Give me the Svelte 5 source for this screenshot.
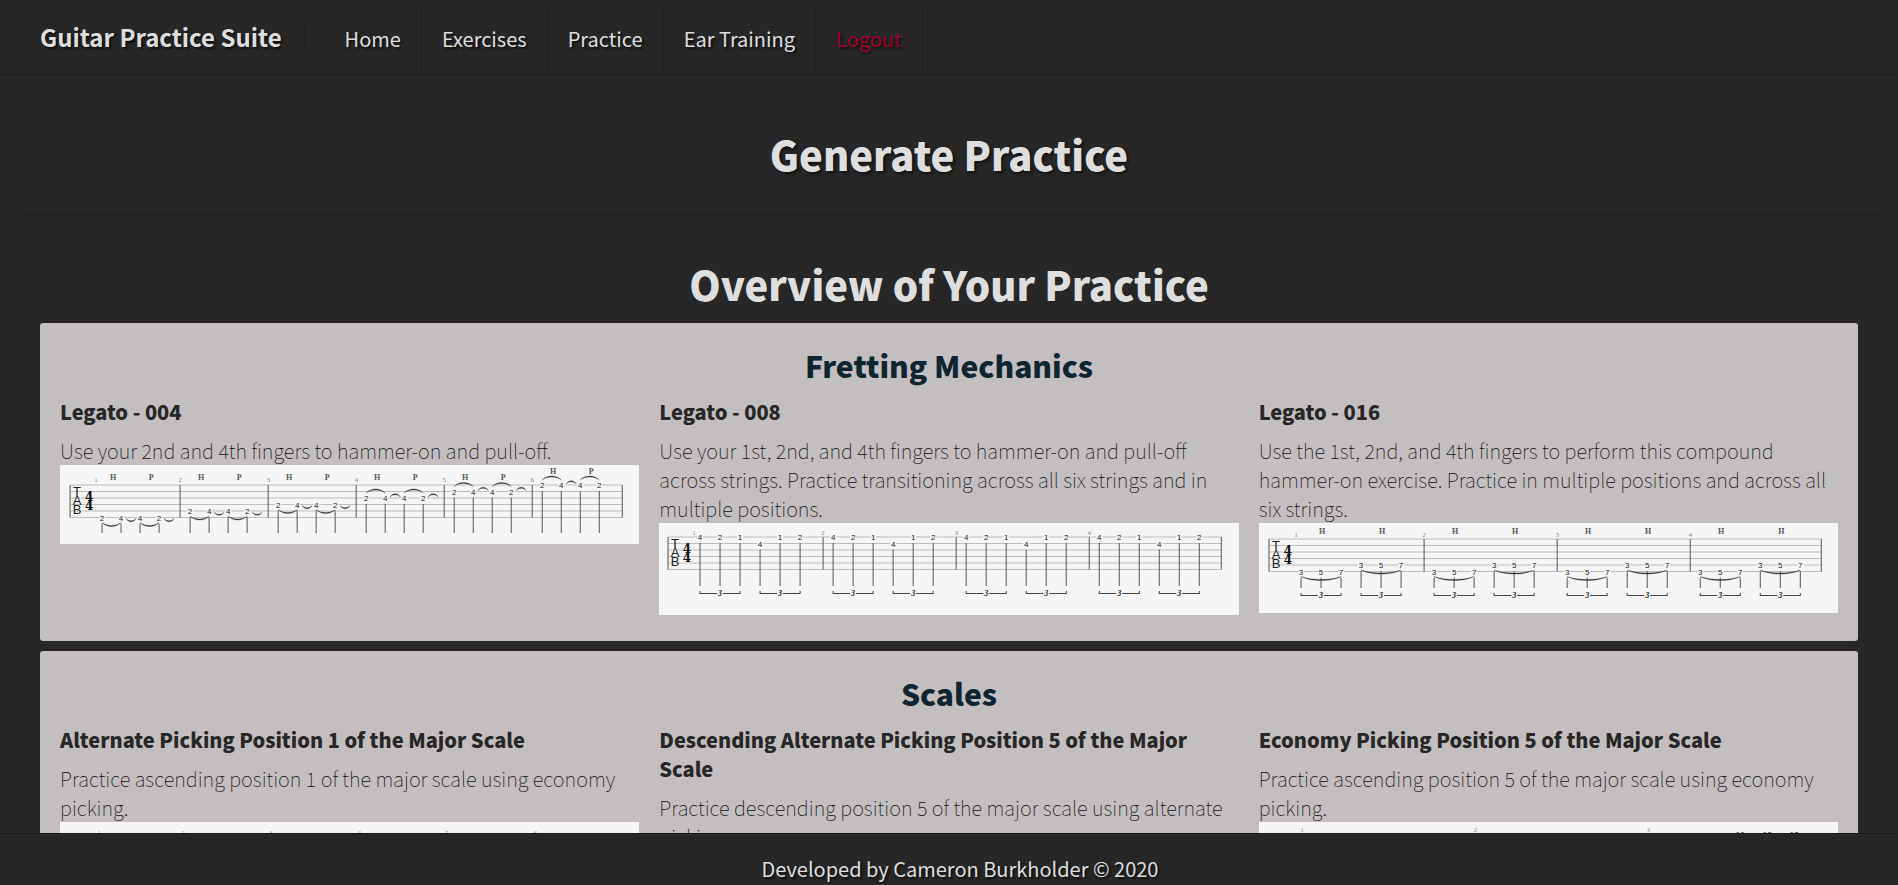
<script>
  const links = ['Home', 'Exercises', 'Practice', 'Ear Training'];

  const legato4 = {
    label: 'Tablature for Legato - 004',
    height: 79, top: 20, left: 10, gap: 88, measures: 6, origin: 32, numberY: 15, firstNumber: 36, stemEnd: 68,
    notes: (m) => [2, 4, 4, 2].map((fret, i) => ({ x: 10 + i * 19, fret, string: 5 - m })),
    slurs: (m) => {
      const up = m > 2;
      return [
        { from: 10, to: 29, string: 5 - m, up, wide: true },
        { from: 34, to: 44, string: 5 - m, up },
        { from: 48, to: 67, string: 5 - m, up, wide: true },
        ...(m < 5 ? [{ from: 72, to: 82, string: 5 - m, up }] : [])
      ];
    },
    marks: (m) => [
      { x: 21, y: m === 5 ? 6 : 12, text: 'H' },
      { x: 59, y: m === 5 ? 6 : 12, text: 'P' }
    ],
    triplets: []
  };

  const legato8 = {
    label: 'Tablature for Legato - 008',
    height: 92, top: 14, left: 9, gap: 133, measures: 4, origin: 31, numberY: 10, firstNumber: 35, stemEnd: 63,
    notes: () => [4, 2, 1, 4, 1, 2].map((fret, i) => ({ x: 10 + i * 20, fret, string: i === 3 ? 1 : 0 })),
    slurs: () => [],
    marks: () => [],
    triplets: [10, 70], tripletY: 70
  };

  const legato16 = {
    label: 'Tablature for Legato - 016',
    height: 90, top: 16, left: 10, gap: 133, measures: 4, origin: 32, numberY: 12, firstNumber: 37, stemEnd: 65,
    notes: () => [3, 5, 7, 3, 5, 7].map((fret, i) => ({ x: 10 + i * 20, fret, string: i < 3 ? 5 : 4 })),
    slurs: () => [
      { from: 10, to: 50, string: 5, wide: true },
      { from: 70, to: 110, string: 4, wide: true }
    ],
    marks: () => [{ x: 31, y: 8, text: 'H' }, { x: 91, y: 8, text: 'H' }],
    triplets: [10, 70], tripletY: 72
  };

  const scaleTab = (label, top, gap, measures, origin, firstNumber, notes) => ({
    label, height: 92, top, left: 10, gap, measures, origin, firstNumber, numberY: top - 4, stemEnd: 68,
    notes, slurs: () => [], marks: () => [], triplets: []
  });

  const ascending = scaleTab('Tablature for position 1', 15, 88, 6, 35, 39, (m) =>
    [2, 4, 5, 2].map((fret, i) => ({ x: 10 + i * 19, fret, string: 5 - m })));
  const descending = scaleTab('Tablature for descending position 5', 16, 133, 4, 32, 36, (m) =>
    [13, 12, 10, 13].map((fret, i) => ({ x: 12 + i * 28, fret, string: m })));
  const economy = scaleTab('Tablature for position 5', 12, 173, 3, 43, 43, (m) =>
    [10, 12, 13, 10, 12, 13].map((fret, i) => ({ x: 11 + i * 27, fret, string: 5 - m * 2 - (i > 2 ? 1 : 0) })));

  const sections = [
    {
      title: 'Fretting Mechanics',
      exercises: [
        { title: 'Legato - 004', text: 'Use your 2nd and 4th fingers to hammer-on and pull-off.', tab: legato4 },
        { title: 'Legato - 008', text: 'Use your 1st, 2nd, and 4th fingers to hammer-on and pull-off across strings. Practice transitioning across all six strings and in multiple positions.', tab: legato8 },
        { title: 'Legato - 016', text: 'Use the 1st, 2nd, and 4th fingers to perform this compound hammer-on exercise. Practice in multiple positions and across all six strings.', tab: legato16 }
      ]
    },
    {
      title: 'Scales',
      exercises: [
        { title: 'Alternate Picking Position 1 of the Major Scale', text: 'Practice ascending position 1 of the major scale using economy picking.', tab: ascending },
        { title: 'Descending Alternate Picking Position 5 of the Major Scale', text: 'Practice descending position 5 of the major scale using alternate picking.', tab: descending },
        { title: 'Economy Picking Position 5 of the Major Scale', text: 'Practice ascending position 5 of the major scale using economy picking.', tab: economy }
      ]
    }
  ];

  const spacing = 6.5;
  const right = 562;
  const stringY = (tab, n) => tab.top + n * spacing;

  function slurPath(tab, x0, s) {
    const dir = s.up ? -1 : 1;
    const y = stringY(tab, s.string) + dir * (s.wide ? 5 : 1);
    const bend = s.wide ? 4 : 3;
    const a = x0 + s.from;
    const b = x0 + s.to;
    const q = (b - a) / 4;
    return `M${a} ${y}C${a + q} ${y + dir * bend} ${b - q} ${y + dir * bend} ${b} ${y}C${b - q} ${y + dir * (bend + 1.4)} ${a + q} ${y + dir * (bend + 1.4)} ${a} ${y}Z`;
  }
</script>

{#snippet tablature(tab)}
  {@const bottom = stringY(tab, 5)}
  <svg class="tab" viewBox="0 0 579 {tab.height}" role="img" aria-label={tab.label}>
    {#each [0, 1, 2, 3, 4, 5] as n}
      <line class="string" x1={tab.left} x2={right} y1={stringY(tab, n)} y2={stringY(tab, n)} />
    {/each}
    <line class="bar" x1={tab.left} x2={tab.left} y1={tab.top} y2={bottom} />
    {#each ['T', 'A', 'B'] as letter, i}
      <text class="clef" x={tab.left + 7} y={tab.top + 11 + i * 9}>{letter}</text>
    {/each}
    <text class="meter" x={tab.left + 19} y={tab.top + 16}>4</text>
    <text class="meter" x={tab.left + 19} y={tab.top + 25}>4</text>
    {#each Array(tab.measures) as _, m}
      {@const x0 = tab.origin + m * tab.gap}
      <text class="number" x={m === 0 ? tab.firstNumber : x0} y={tab.numberY + 2}>{m + 1}</text>
      <line class="bar" x1={m === tab.measures - 1 ? right : x0 + tab.gap} x2={m === tab.measures - 1 ? right : x0 + tab.gap} y1={tab.top} y2={bottom} />
      {#each tab.notes(m) as note}
        {@const y = stringY(tab, note.string)}
        <line class="stem" x1={x0 + note.x} x2={x0 + note.x} y1={y + 6} y2={tab.stemEnd} />
        <rect class="mask" x={x0 + note.x - 3} y={y - 3} width="6" height="6" />
        <text class="fret" x={x0 + note.x} y={y + 3}>{note.fret}</text>
      {/each}
      {#each tab.slurs(m) as slur}
        <path class="slur" d={slurPath(tab, x0, slur)} />
      {/each}
      {#each tab.marks(m) as mark}
        <text class="mark" x={x0 + mark.x} y={mark.y + 3}>{mark.text}</text>
      {/each}
      {#each tab.triplets as t}
        {@const a = x0 + t}
        <path class="bracket" d="M{a} {tab.tripletY - 2}v2.5h17M{a + 23} {tab.tripletY + 0.5}h17v-2.5" />
        <text class="triplet" x={a + 20} y={tab.tripletY + 3}>3</text>
      {/each}
    {/each}
  </svg>
{/snippet}

<div class="page">
  <header>
    <a class="brand" href="#home">Guitar Practice Suite</a>
    <nav aria-label="Main">
      {#each links as link}
        <a href="#{link.toLowerCase().replace(' ', '-')}">{link}</a>
      {/each}
      <a class="logout" href="#logout">Logout</a>
    </nav>
  </header>

  <main>
    <div class="hero"><h1>Generate Practice</h1></div>
    <div class="overview">
      <h1>Overview of Your Practice</h1>
      {#each sections as section}
        <section>
          <h2>{section.title}</h2>
          <div class="columns">
            {#each section.exercises as exercise}
              <article>
                <h3>{exercise.title}</h3>
                <p>{exercise.text}</p>
                {@render tablature(exercise.tab)}
              </article>
            {/each}
          </div>
        </section>
      {/each}
    </div>
  </main>

  <footer>Developed by Cameron Burkholder © 2020</footer>
</div>

<style>
  :global(body) {
    background: #272727;
  }

  .page {
    display: flex;
    flex-direction: column;
    height: 100vh;
    background: #272727;
    color: #dedede;
    font-family: "Noto Sans CJK SC", "Noto Sans", sans-serif;
    font-size: 20px;
    line-height: 29px;
  }

  header {
    display: flex;
    align-items: center;
    flex-shrink: 0;
    padding: 4px 40px 1px;
    border-bottom: 1px solid #1e1e1e;
    text-shadow: 2px 2px 2px #111;
  }

  header a {
    color: inherit;
    text-decoration: none;
  }

  .brand {
    padding: 0 22px 3px 0;
    border-right: 1px solid #202020;
    font-size: 24px;
    font-weight: 700;
    line-height: 26px;
  }

  nav {
    display: flex;
    margin-left: 20px;
  }

  nav a {
    padding: 20px;
    border-right: 1px solid #202020;
  }

  nav .logout {
    color: #a0002d;
  }

  main {
    flex: 1;
    min-height: 0;
    overflow-y: auto;
    scrollbar-width: none;
  }

  h1,
  h2,
  h3,
  p {
    margin: 0;
  }

  h1 {
    font-size: 40px;
    font-weight: 900;
    line-height: 54px;
    text-align: center;
  }

  .hero {
    margin: 0 20px;
    padding: 52px 0 33px;
    border-bottom: 1px solid #1e1e1e;
    text-shadow: 2px 2px 3px #111;
  }

  .overview {
    display: flex;
    flex-direction: column;
    gap: 10px;
    padding: 42px 40px 20px;
  }

  .overview h1 {
    margin-bottom: 2px;
  }

  section {
    padding: 20px 20px 26px;
    border-radius: 3px;
    background: #c3bebf;
    color: #272727;
  }

  h2 {
    color: #10252f;
    font-size: 30px;
    font-weight: 900;
    line-height: 44px;
    text-align: center;
  }

  .columns {
    display: grid;
    grid-template-columns: repeat(3, minmax(0, 1fr));
    align-items: start;
    gap: 20px;
    padding-top: 10px;
  }

  h3 {
    margin-bottom: 10px;
    font-size: 20px;
    font-weight: 900;
    line-height: 29px;
  }

  p {
    color: #111;
    font-weight: 100;
  }

  .tab {
    display: block;
    width: 100%;
    background: #f5f5f5;
    text-anchor: middle;
    line-height: 1;
  }

  .string {
    stroke: #bdbdbd;
    stroke-width: 1;
  }

  .bar {
    stroke: #555;
    stroke-width: 1;
  }

  .stem {
    stroke: #555;
    stroke-width: 1;
  }

  .mask {
    fill: #f5f5f5;
  }

  .slur {
    fill: #333;
    stroke: #333;
    stroke-width: 0.3;
  }

  .bracket {
    fill: none;
    stroke: #444;
    stroke-width: 1;
  }

  .clef,
  .fret {
    fill: #222;
    font-family: "Liberation Sans", sans-serif;
  }

  .clef {
    font-size: 13px;
  }

  .fret {
    font-size: 8px;
  }

  .meter {
    fill: #111;
    font: 700 12px "DejaVu Serif", serif;
  }

  .number {
    fill: #888;
    font: 7px "Liberation Serif", serif;
  }

  .mark {
    fill: #555;
    font: 700 8px "Liberation Serif", serif;
  }

  .triplet {
    fill: #222;
    font: italic 700 8px "Liberation Serif", serif;
  }

  footer {
    flex-shrink: 0;
    padding: 20px 0 2px 22px;
    border-top: 1px solid #1a1a1a;
    text-align: center;
    text-shadow: 2px 2px 2px #111;
  }
</style>
